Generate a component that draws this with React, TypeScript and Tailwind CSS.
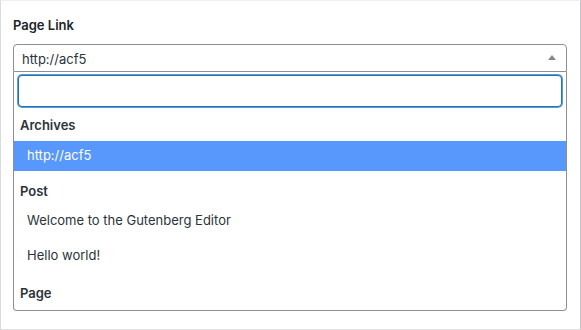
export default function App() {
  return (
    <div
      className="w-[581px] h-[330px] bg-white border-t border-t-[#f0f0f1] border-l border-r border-b border-l-[#dcdcde] border-r-[#c3c4c7] border-b-[#e0e0e0] text-[13px] text-[#2c3338]"
      style={{ fontFamily: 'Inter, "Liberation Sans", Arial, sans-serif' }}
    >
      <div className="pl-[12px] pr-[12px] pt-[15px]">
        <div className="font-semibold text-[#1d2327] leading-[18px] h-[18px]">Page Link</div>
        <div className="mt-[10px] w-[554px]">
          {/* closed select */}
          <div className="h-[28px] border border-[#8c8f94] rounded-t-[4px] flex items-center justify-between pl-[8px] pr-[10px]">
            <span className="leading-[18px] mt-[1px]">http://acf5</span>
            <span className="w-0 h-0 border-l-[4px] border-r-[4px] border-b-[5px] border-l-transparent border-r-transparent border-b-[#888] mt-[-1px]" />
          </div>
          {/* dropdown */}
          <div className="border border-t-0 border-[#8c8f94] rounded-b-[4px] pb-[1px]">
            <div className="p-[4px] pt-[3px]">
              <div className="h-[32px] border border-[#2271b1] rounded-[4px] shadow-[0_0_0_1px_#5b9dd9] bg-white" />
            </div>
            <div className="h-[30px] flex items-center pl-[6px] font-semibold">Archives</div>
            <div className="h-[30px] flex items-center pl-[13px] bg-[#5897fb] text-white">http://acf5</div>
            <div className="mt-[6px] h-[30px] flex items-center pl-[6px] font-semibold">Post</div>
            <div className="h-[28px] flex items-center pl-[13px]">Welcome to the Gutenberg Editor</div>
            <div className="mt-[6px] h-[30px] flex items-center pl-[13px]">Hello world!</div>
            <div className="mt-[8px] h-[30px] flex items-center pl-[6px] font-semibold">Page</div>
          </div>
        </div>
      </div>
    </div>
  );
}
